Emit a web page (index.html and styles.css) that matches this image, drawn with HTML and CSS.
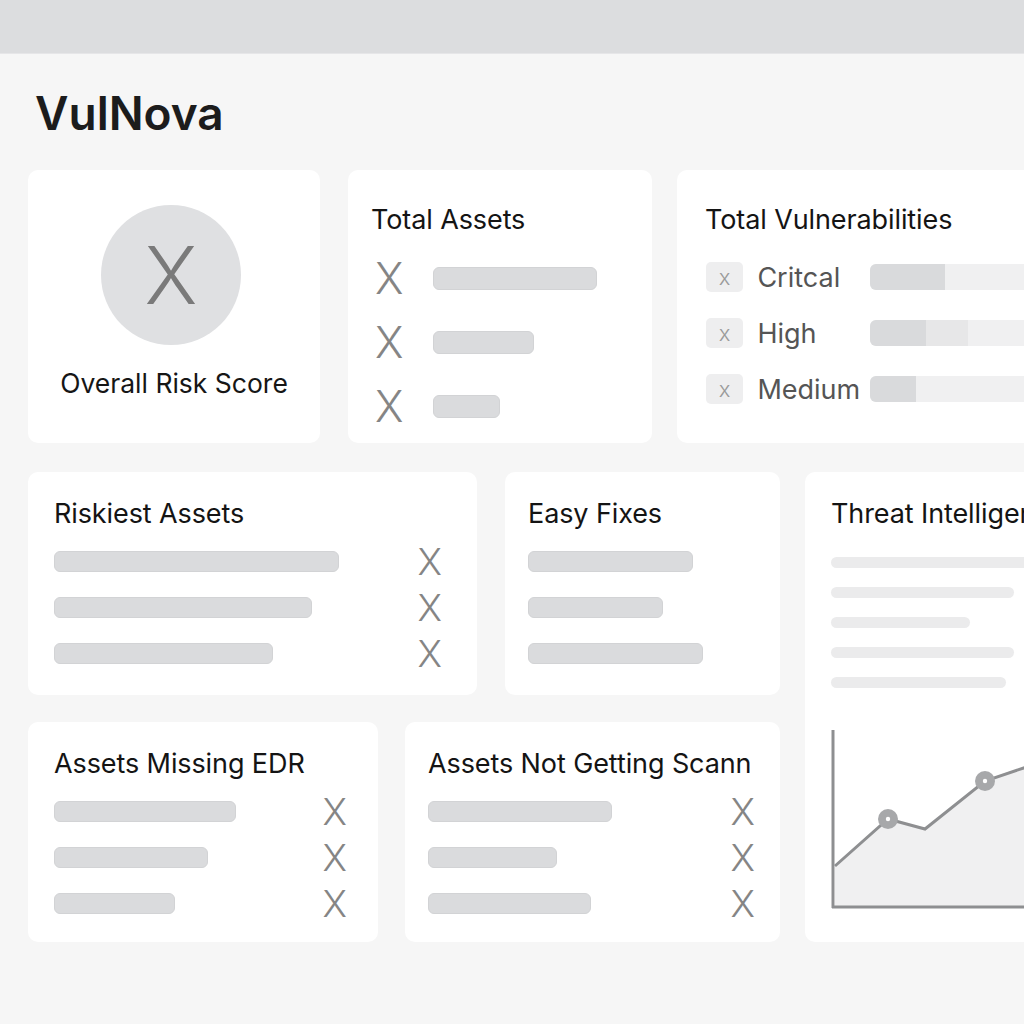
FILE: index.html
```html
<!DOCTYPE html>
<html>
<head>
<meta charset="utf-8">
<link rel="stylesheet" href="styles.css">
</head>
<body>
<div class="topbar"></div>
<main class="main">
  <h1 class="brand">VulNova</h1>
  <div class="row1">
    <section class="card score-card">
      <div class="score-circle"><span class="score-x">X</span></div>
      <div class="score-label">Overall Risk Score</div>
    </section>
    <section class="card assets-card">
      <h2 class="card-title">Total Assets</h2>
      <div class="asset-row"><span class="x-mark x-asset">X</span><span class="bar bar-asset" style="width:164px"></span></div>
      <div class="asset-row"><span class="x-mark x-asset">X</span><span class="bar bar-asset" style="width:101px"></span></div>
      <div class="asset-row"><span class="x-mark x-asset">X</span><span class="bar bar-asset" style="width:67px"></span></div>
    </section>
    <section class="card vuln-card">
      <h2 class="card-title">Total Vulnerabilities</h2>
      <div class="vuln-row">
        <span class="badge">x</span><span class="vuln-label">Critcal</span>
        <span class="track"><span class="fill" style="width:75px"></span></span>
      </div>
      <div class="vuln-row">
        <span class="badge">x</span><span class="vuln-label">High</span>
        <span class="track"><span class="fill" style="width:56px"></span><span class="fill-mid" style="width:42px"></span></span>
      </div>
      <div class="vuln-row">
        <span class="badge">x</span><span class="vuln-label">Medium</span>
        <span class="track"><span class="fill" style="width:46px"></span></span>
      </div>
    </section>
  </div>
  <div class="lower">
    <div class="left-col">
      <div class="row2">
        <section class="card list-card riskiest">
          <h2 class="card-title">Riskiest Assets</h2>
          <div class="list-row"><span class="bar bar-list" style="width:285px"></span><span class="x-mark x-list">X</span></div>
          <div class="list-row"><span class="bar bar-list" style="width:258px"></span><span class="x-mark x-list">X</span></div>
          <div class="list-row"><span class="bar bar-list" style="width:219px"></span><span class="x-mark x-list">X</span></div>
        </section>
        <section class="card list-card easy">
          <h2 class="card-title">Easy Fixes</h2>
          <div class="list-row"><span class="bar bar-list" style="width:165px"></span></div>
          <div class="list-row"><span class="bar bar-list" style="width:135px"></span></div>
          <div class="list-row"><span class="bar bar-list" style="width:175px"></span></div>
        </section>
      </div>
      <div class="row3">
        <section class="card list-card edr">
          <h2 class="card-title">Assets Missing EDR</h2>
          <div class="list-row"><span class="bar bar-list" style="width:182px"></span><span class="x-mark x-list">X</span></div>
          <div class="list-row"><span class="bar bar-list" style="width:154px"></span><span class="x-mark x-list">X</span></div>
          <div class="list-row"><span class="bar bar-list" style="width:121px"></span><span class="x-mark x-list">X</span></div>
        </section>
        <section class="card list-card scan">
          <h2 class="card-title clip">Assets Not Getting Scann</h2>
          <div class="list-row"><span class="bar bar-list" style="width:184px"></span><span class="x-mark x-list">X</span></div>
          <div class="list-row"><span class="bar bar-list" style="width:129px"></span><span class="x-mark x-list">X</span></div>
          <div class="list-row"><span class="bar bar-list" style="width:163px"></span><span class="x-mark x-list">X</span></div>
        </section>
      </div>
    </div>
    <section class="card threat-card">
      <h2 class="card-title">Threat Intelligence</h2>
      <div class="lines">
        <span class="line" style="width:230px"></span>
        <span class="line" style="width:183px"></span>
        <span class="line" style="width:139px"></span>
        <span class="line" style="width:183px"></span>
        <span class="line" style="width:175px"></span>
      </div>
      <svg class="chart" width="260" height="200" viewBox="0 0 260 200">
        <polygon points="30,150 83,103 120,113 180,65 260,38 260,191 30,191" fill="#f0f0f1"/>
        <polyline points="30,150 83,103 120,113 180,65 260,38" fill="none" stroke="#8e8f91" stroke-width="3" stroke-linejoin="miter"/>
        <line x1="28" y1="14" x2="28" y2="192" stroke="#8e8f91" stroke-width="3"/>
        <line x1="27" y1="191" x2="260" y2="191" stroke="#8e8f91" stroke-width="3"/>
        <circle cx="83" cy="103" r="10" fill="#a7a8aa"/>
        <circle cx="83" cy="103" r="2.2" fill="#ffffff"/>
        <circle cx="180" cy="65" r="10" fill="#a7a8aa"/>
        <circle cx="180" cy="65" r="2.2" fill="#ffffff"/>
      </svg>
    </section>
  </div>
</main>
</body>
</html>
```

FILE: styles.css
```css
html, body {
  margin: 0;
  padding: 0;
}
body {
  width: 1024px;
  height: 1024px;
  overflow: hidden;
  background: #f6f6f6;
  font-family: Inter, "Noto Sans", "Liberation Sans", sans-serif;
  color: #161616;
}
.topbar {
  height: 53px;
  background: #dcdddf;
  border-bottom: 1px solid #e6e6e8;
}
.main {
  padding-left: 28px;
}
.brand {
  margin: 0;
  padding: 30px 0 0 7px;
  height: 86px;
  box-sizing: border-box;
  font-size: 46px;
  font-weight: 600;
  line-height: 58px;
  letter-spacing: 0;
  color: #1c1c1c;
}
.card {
  background: #ffffff;
  border-radius: 10px;
  box-sizing: border-box;
  flex-shrink: 0;
}
.card-title {
  margin: 0;
  font-size: 27px;
  font-weight: 400;
  line-height: 32px;
  color: #141414;
  white-space: nowrap;
  letter-spacing: -0.1px;
}
.row1 {
  display: flex;
  gap: 28px;
  margin-top: 30px;
  height: 273px;
}
.score-card {
  width: 292px;
  display: flex;
  flex-direction: column;
  align-items: center;
  padding-top: 35px;
}
.score-circle {
  width: 140px;
  height: 140px;
  border-radius: 50%;
  background: #dfe0e2;
  display: flex;
  align-items: center;
  justify-content: center;
  margin-right: 6px;
}
.score-x {
  font-size: 80px;
  font-weight: 300;
  color: #7a7a7a;
  line-height: 1;
}
.score-label {
  margin-top: 22px;
  font-size: 26.5px;
  line-height: 32px;
  color: #161616;
}
.assets-card {
  width: 304px;
  padding: 34px 0 0 23px;
}
.asset-row {
  display: flex;
  align-items: center;
  height: 64px;
}
.assets-card .card-title {
  margin-bottom: 10px;
}
.x-mark {
  font-weight: 300;
  color: #858585;
  line-height: 1;
}
.x-asset {
  font-size: 43px;
  width: 58px;
  padding-left: 4px;
}
.bar {
  display: block;
  background: #dadbdd;
  border: 1px solid #d2d3d5;
  box-sizing: border-box;
  border-radius: 6px;
}
.bar-asset {
  height: 23px;
}
.vuln-card {
  width: 380px;
  padding: 34px 0 0 28px;
  margin-left: -3px;
}
.vuln-card .card-title {
  margin-bottom: 13px;
}
.vuln-row {
  display: flex;
  align-items: center;
  height: 56px;
}
.badge {
  width: 40px;
  height: 30px;
  background: #eeeeef;
  border-radius: 5px;
  display: flex;
  align-items: center;
  justify-content: center;
  font-size: 22px;
  color: #9a9a9a;
  font-weight: 300;
  margin-left: 1px;
}
.vuln-label {
  width: 113px;
  padding-left: 14px;
  font-size: 27px;
  color: #555555;
  font-weight: 400;
}
.track {
  display: flex;
  width: 200px;
  height: 26px;
  border-radius: 6px;
  background: #f0f0f1;
  overflow: hidden;
  margin-left: 7px;
}
.fill {
  background: #d9dadc;
}
.fill-mid {
  background: #e7e7e8;
}
.lower {
  display: flex;
  gap: 25px;
  margin-top: 29px;
}
.left-col {
  display: flex;
  flex-direction: column;
  gap: 27px;
  width: 752px;
}
.row2, .row3 {
  display: flex;
}
.row2 { gap: 28px; height: 223px; }
.row3 { gap: 27px; height: 220px; }
.list-card {
  padding: 26px 0 0 26px;
}
.list-card .card-title {
  margin-bottom: 8px;
}
.riskiest { width: 449px; }
.easy { width: 275px; padding-left: 23px; }
.edr { width: 350px; }
.scan { width: 375px; padding-left: 23px; }
.clip { overflow: hidden; }
.list-row {
  display: flex;
  align-items: center;
  height: 46px;
}
.bar-list {
  height: 21px;
}
.x-list {
  font-size: 37px;
  margin-left: auto;
}
.riskiest .x-list { margin-right: 35px; }
.edr .x-list { margin-right: 31px; }
.scan .x-list { margin-right: 25px; }
.threat-card {
  width: 260px;
  height: 470px;
  padding: 26px 0 0 26px;
  overflow: hidden;
}
.lines {
  display: flex;
  flex-direction: column;
  gap: 19px;
  margin-top: 27px;
}
.line {
  display: block;
  height: 11px;
  border-radius: 6px;
  background: #ebebec;
}
.chart {
  display: block;
  margin-left: -26px;
  margin-top: 28px;
}
```
